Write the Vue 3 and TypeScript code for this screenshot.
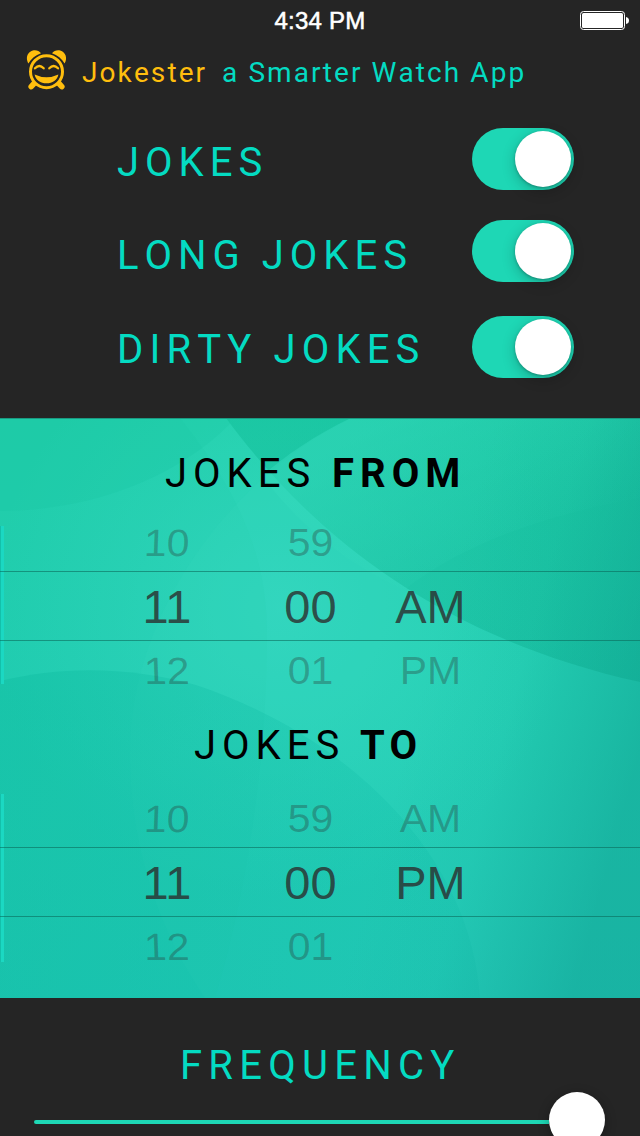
<script setup lang="ts">
import { ref } from 'vue'

interface Setting { label: string; on: boolean }
interface Picker { word: string; cls: string; rows: string[][] }

const settings = ref<Setting[]>([
  { label: 'JOKES', on: true },
  { label: 'LONG JOKES', on: true },
  { label: 'DIRTY JOKES', on: true },
])

const pickers: Picker[] = [
  { word: 'FROM', cls: 'from', rows: [['10', '59', ''], ['11', '00', 'AM'], ['12', '01', 'PM']] },
  { word: 'TO', cls: 'to', rows: [['10', '59', 'AM'], ['11', '00', 'PM'], ['12', '01', '']] },
]
const rowClass = ['above', 'selected', 'below']
</script>

<template>
  <main class="screen">
    <div class="status">
      <span class="time">4:34 PM</span>
      <svg class="battery" width="50" height="20" viewBox="0 0 50 20">
        <rect x="0.5" y="0.5" width="44" height="18" rx="3" fill="none" stroke="#fff" />
        <rect x="2" y="2" width="41" height="15" rx="1.5" fill="#fff" />
        <path d="M46 6q3 .5 3 3.5t-3 3.5z" fill="#fff" />
      </svg>
    </div>

    <header class="brand">
      <svg class="logo" width="42" height="42" viewBox="0 0 42 42" fill="#ffbe0e">
        <path d="M2.400 14.500C-.8 9 1.300 3 6.800 1.400c3.200-.8 6.400.3 8.200 2.900C9.600 6.200 5 9.900 2.400 14.500z" />
        <path d="M38.600 14.500C41.800 9 39.700 3 34.200 1.400c-3.200-.8-6.400.3-8.200 2.900 5.400 1.900 10 5.600 12.600 10.200z" />
        <path d="M8.500 34L5.200 37.600M32.500 34l3.300 3.600" stroke="#ffbe0e" stroke-width="5.600" stroke-linecap="round" />
        <circle cx="20.500" cy="22.700" r="16" fill="#252525" stroke="#ffbe0e" stroke-width="3" />
        <path d="M9 19.300q4.300-4.600 8.700 0M23.300 19.300q4.300-4.600 8.700 0" fill="none" stroke="#ffbe0e" stroke-width="2.300" stroke-linecap="round" />
        <path d="M8.600 25.400q11.900 5.600 23.800 0c-1 5.800-6 8.900-11.900 8.900s-10.900-3.100-11.900-8.900z" />
      </svg>
      <span class="name">Jokester</span>
      <span class="tagline">a Smarter Watch App</span>
    </header>

    <section class="settings">
      <div class="labels">
        <div v-for="s in settings" :key="s.label" class="caption">{{ s.label }}</div>
      </div>
      <div class="switches">
        <button v-for="s in settings" :key="s.label" class="switch" :class="{ on: s.on }" :aria-label="s.label" @click="s.on = !s.on">
          <span class="knob"></span>
        </button>
      </div>
    </section>

    <section class="schedule">
      <svg class="backdrop" width="640" height="580" viewBox="0 0 640 580">
        <defs>
          <linearGradient id="base" x1="0" y1="0" x2="0" y2="1">
            <stop offset="0" stop-color="#22d0ab" />
            <stop offset=".45" stop-color="#22ceb2" />
            <stop offset="1" stop-color="#21c9b7" />
          </linearGradient>
          <radialGradient id="glow" gradientUnits="userSpaceOnUse" cx="280" cy="190" r="290">
            <stop offset="0" stop-color="#3adac4" stop-opacity=".65" />
            <stop offset="1" stop-color="#3adac4" stop-opacity="0" />
          </radialGradient>
          <linearGradient id="edge" gradientUnits="userSpaceOnUse" x1="440" y1="200" x2="660" y2="260">
            <stop offset="0" stop-color="#078f82" stop-opacity="0" />
            <stop offset=".4" stop-color="#078f82" stop-opacity=".06" />
            <stop offset="1" stop-color="#078f82" stop-opacity=".38" />
          </linearGradient>
          <linearGradient id="shade" x1="0" y1="0" x2="1" y2="1">
            <stop offset="0" stop-color="#0ab891" stop-opacity=".4" />
            <stop offset="1" stop-color="#0aac8c" stop-opacity=".45" />
          </linearGradient>
          <linearGradient id="hill" x1="0" y1="0" x2="1" y2="0">
            <stop offset="0" stop-color="#0bb99d" stop-opacity=".36" />
            <stop offset="1" stop-color="#0bb9a5" stop-opacity=".16" />
          </linearGradient>
          <linearGradient id="crest" gradientUnits="userSpaceOnUse" x1="390" y1="0" x2="480" y2="160">
            <stop offset="0" stop-color="#34dabc" stop-opacity=".5" />
            <stop offset="1" stop-color="#34dabc" stop-opacity=".03" />
          </linearGradient>
        </defs>
        <rect width="640" height="580" fill="url(#base)" />
        <rect width="640" height="580" fill="url(#glow)" />
        <path d="M0 0H230V6C176 60 90 93 0 93z" fill="#12c5a0" fill-opacity=".2" />
        <path d="M180 0C236 70 267 135 267 215C267 350 245 480 215 580H0V0z" fill="#0abc96" fill-opacity=".06" />
        <path d="M226 0C300 100 420 215 640 264V0z" fill="url(#shade)" />
        <path d="M351 0C236 56 130 190 130 335C130 430 160 515 205 580H640V0z" fill="#43dbc5" fill-opacity=".09" />
        <path d="M351 0C315 17 285 38 262 58C310 120 355 148 404 172C470 120 560 94 640 80V0z" fill="url(#crest)" />
        <path d="M0 263C60 248 130 248 196 267C340 315 470 430 480 580H0z" fill="url(#hill)" />
        <rect width="640" height="580" fill="url(#edge)" />
        <rect width="640" height="1" fill="#199b83" />
      </svg>

      <div v-for="p in pickers" :key="p.word" class="picker" :class="p.cls">
        <h2 class="caption title">JOKES <b>{{ p.word }}</b></h2>
        <div class="wheel">
          <i class="rail"></i>
          <div v-for="(row, i) in p.rows" :key="i" class="row" :class="rowClass[i]">
            <span v-for="(cell, j) in row" :key="j" class="cell"><span class="value">{{ cell }}</span></span>
          </div>
        </div>
      </div>
    </section>

    <section class="frequency">
      <h2 class="caption">FREQUENCY</h2>
      <div class="slider">
        <span class="track"></span><span class="thumb"></span>
      </div>
    </section>
  </main>
</template>

<style>
body { background: #252525; }
</style>

<style scoped>
.screen { width: 640px; height: 1136px; overflow: hidden; background: #252525; color: #04dbc2; font-family: Roboto, sans-serif; font-kerning: none; }
h2 { margin: 0; }
.status { height: 40px; display: grid; grid-template-columns: 60px 520px 60px; align-items: center; color: #fff; }
.time { grid-column: 2; text-align: center; font: 24px/42px "Liberation Sans", Arial, sans-serif; letter-spacing: .25px; -webkit-text-stroke: .55px #fff; }
.battery { margin-top: -1px; }
.brand { height: 68px; display: flex; box-sizing: border-box; padding-left: 26px; font-size: 28px; line-height: 66px; letter-spacing: 2.100px; white-space: nowrap; }
.logo { margin-top: 9px; }
.name { width: 140px; padding-left: 14px; box-sizing: border-box; color: #ffbe0e; margin-right: 14px; }
.settings { height: 310px; display: flex; }
.labels { width: 355px; padding: 7.500px 0 0 117px; }
.labels .caption { line-height: 93.500px; }
.caption { font-size: 40px; font-weight: 400; letter-spacing: 6px; white-space: nowrap; }
.labels .caption:last-child { letter-spacing: 6.150px; }
.switches { padding-top: 20px; display: flex; flex-direction: column; }
.switch { width: 102px; height: 62px; box-sizing: border-box; border: 0; border-radius: 31px; background: #555; padding: 3px; display: flex; margin-bottom: 30px; }
.switch:nth-child(2) { margin-bottom: 34px; }
.switch.on { background: #1ed7b5; justify-content: flex-end; }
.knob { width: 56px; height: 56px; border-radius: 50%; background: #fff; box-shadow: 0 4px 14px rgba(0,0,0,.22), 0 1px 3px rgba(0,0,0,.25); }
.schedule { height: 580px; position: relative; overflow: hidden; }
.backdrop { position: absolute; inset: 0; }
.picker { position: relative; }
.title { color: #000; line-height: 60px; }
.title b { font-weight: 700; }
.from { height: 272px; padding-top: 26px; box-sizing: border-box; }
.from .title { padding-left: 165px; }
.to { padding-top: 26px; }
.to .title { padding-left: 194px; }
.to b { letter-spacing: 4.500px; margin-left: -1px; }
.wheel { position: relative; font-family: "Liberation Sans", Arial, sans-serif; font-kerning: normal; color: rgba(43,43,43,.31); }
.from .wheel { padding-top: 15px; margin-top: 22px; }
.to .wheel { padding-top: 23px; margin-top: 18px; }
.rail { position: absolute; left: 0; top: 0; width: 3px; height: 158px; border-left: 1px solid rgba(10,150,125,.35); background: #1bd8c2; }
.to .rail { height: 168px; }
.row { position: relative; display: grid; grid-template-columns: 144px 143px 96px; padding-left: 95px; font-size: 41px; }
.cell { text-align: center; }
.cell:last-child { padding-left: 1px; }
.value { display: inline-block; }
.above .value, .below .value { transform: scaleY(.93); }
.above .cell:first-child .value { transform: scaleY(.93) skewX(-2deg); }
.below .cell:first-child .value { transform: scaleY(.93) skewX(2deg); }
.selected { height: 68px; line-height: 70px; font-size: 47px; color: rgba(43,43,43,.8); border-top: 1px solid rgba(10,100,85,.55); border-bottom: 1px solid rgba(10,100,85,.55); }
.above { height: 30px; line-height: 5px; }
.below { line-height: 60px; }
.frequency { height: 138px; }
.frequency .caption { padding: 38px 0 0 180px; line-height: 60px; letter-spacing: 6.250px; }
.slider { height: 56px; margin: -4px 35px 0 34px; display: flex; align-items: center; }
.track { width: 515px; height: 4px; border-radius: 2px 0 0 2px; background: #1ed7b5; margin-top: 4px; }
.thumb { width: 56px; height: 56px; border-radius: 50%; background: #fff; box-shadow: 0 3px 12px rgba(0,0,0,.3); flex: none; }
</style>
